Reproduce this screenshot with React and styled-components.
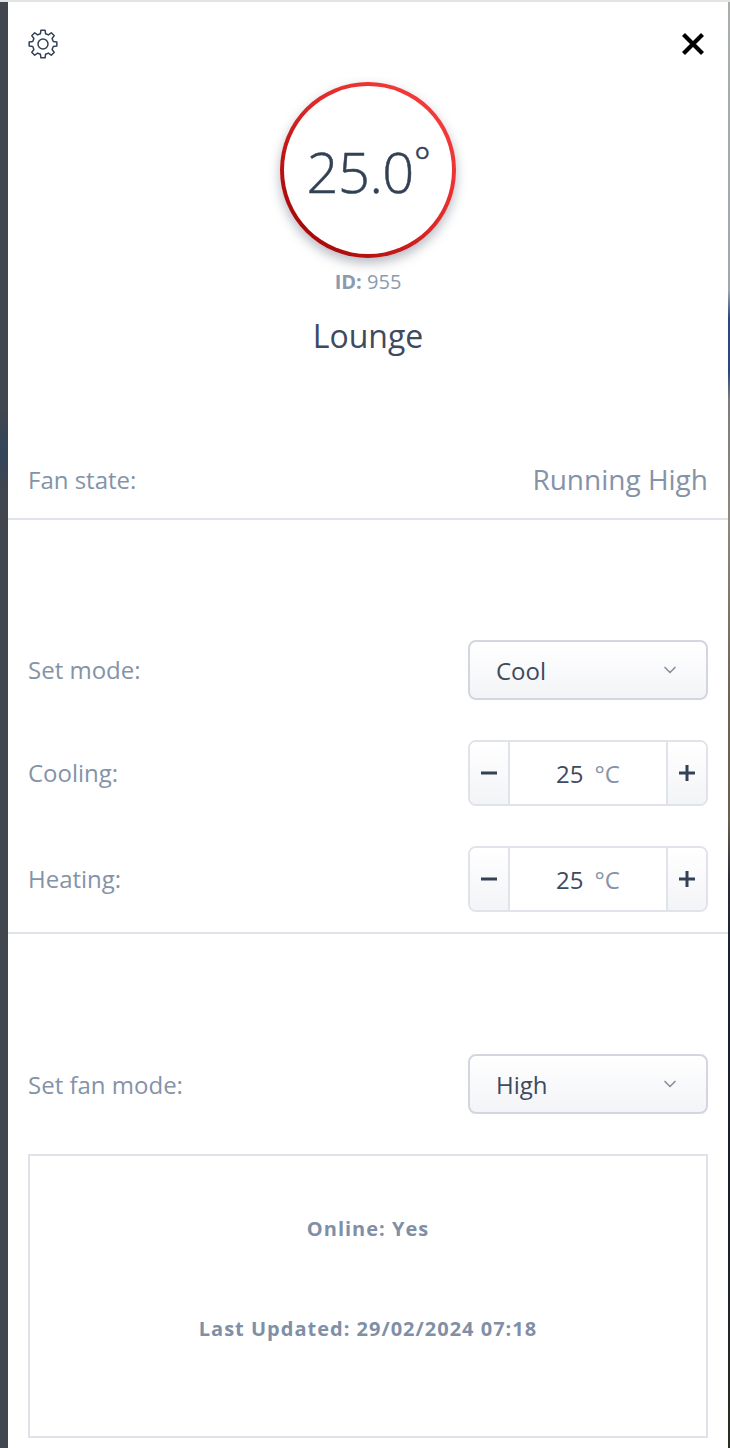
import React from 'react';
import styled, { createGlobalStyle } from 'styled-components';
import { ChevronDown } from 'lucide-react';

const GlobalStyle = createGlobalStyle`
  html, body {
    margin: 0;
    padding: 0;
    height: 1448px;
    overflow: hidden;
    font-family: "Open Sans", "Liberation Sans", sans-serif;
    background: #fff;
  }
`

const Page = styled.div`
  height: 1448px;
  padding: 2px 2px 0 8px;
  box-sizing: border-box;
  background:
    linear-gradient(#e3e3e3, #e3e3e3) top / 100% 2px no-repeat,
    linear-gradient(180deg, #41464f 0, #41464f 410px, #32455b 450px, #41464f 490px, #41464f 100%) left / 8px 100% no-repeat,
    linear-gradient(180deg, #a9aeaa 0, #a0a8ae 290px, #2a4a7c 318px, #2a4a7c 372px, #7e7c7c 400px, #8e887e 520px, #6e6252 700px, #6a6050 820px, #2c2c38 880px, #1a2230 950px, #1a1f2a 1200px, #20242a 1300px, #2a3020 100%) right / 2px 100% no-repeat;
`
const Panel = styled.div`
  height: 100%;
  background: #fff;
  box-sizing: border-box;
  padding: 27px 20px 0;
  overflow: hidden;
`
const TopBar = styled.div`
  display: flex;
  justify-content: space-between;
  align-items: flex-start;
  height: 30px;
`
const IconButton = styled.button`
  border: 0;
  padding: 0;
  margin: 0;
  background: none;
  display: flex;
  color: #334155;
`
const CloseButton = styled(IconButton)`
  margin: 4px 4px 0 0;
`
const Hero = styled.div`
  display: flex;
  flex-direction: column;
  align-items: center;
  margin-top: 23px;
  color: #334155;
`
const Dial = styled.div`
  width: 176px;
  height: 176px;
  box-sizing: border-box;
  border: 4px solid transparent;
  border-radius: 50%;
  background:
    linear-gradient(#fff, #fff) padding-box,
    linear-gradient(45deg, #a80a0a 15%, #e02a2a 55%, #f23a3a 85%) border-box;
  box-shadow: 0 5px 12px rgba(70, 80, 100, 0.4);
  display: flex;
  align-items: center;
  justify-content: center;
`
const DialValue = styled.span`
  font-size: 56px;
  font-weight: 300;
  line-height: 1;
  letter-spacing: -0.5px;
  margin-left: 1px;
  position: relative;
  top: 1px;
  -webkit-text-stroke: 0.5px #334155;
`
const Degree = styled.sup`
  font-size: 40px;
  line-height: 0;
  vertical-align: 16px;
`
const DeviceId = styled.div`
  margin-top: 12px;
  font-size: 20px;
  line-height: 24px;
  color: #8a9bb0;
`
const Strong = styled.b`
  font-weight: 700;
`
const Room = styled.div`
  margin-top: 22px;
  font-size: 32px;
  line-height: 40px;
  color: #3e4a60;
`
const Row = styled.div`
  display: flex;
  justify-content: space-between;
  align-items: center;
  height: ${(p) => p.$height}px;
  margin-top: ${(p) => p.$top}px;
`
const Label = styled.span`
  font-size: 24px;
  color: #8493a8;
`
const ControlLabel = styled(Label)`
  margin-bottom: 2px;
`
const StateValue = styled.span`
  font-size: 28px;
  color: #8493a8;
`
const Divider = styled.div`
  height: 2px;
  background: #e0e3e9;
  margin: ${(p) => p.$top}px -20px 0;
`
const Select = styled.div`
  width: 240px;
  height: 60px;
  box-sizing: border-box;
  border: 2px solid #d3d6e0;
  border-radius: 8px;
  background: linear-gradient(180deg, #fff, #f3f4f7);
  padding: 0 26px;
  display: flex;
  align-items: center;
  justify-content: space-between;
  font-size: 24px;
  color: #3e4a60;
`
const Stepper = styled.div`
  width: 240px;
  height: 66px;
  box-sizing: border-box;
  border: 2px solid #e0e3e9;
  border-radius: 8px;
  display: flex;
  overflow: hidden;
`
const StepButton = styled.div`
  width: 38px;
  background: linear-gradient(180deg, #fff, #f3f4f7);
  display: flex;
  align-items: center;
  justify-content: center;
  color: #334155;
  border-${(p) => p.$side}: 2px solid #e0e3e9;
`
const StepValue = styled.div`
  flex: 1;
  display: flex;
  align-items: center;
  justify-content: center;
  gap: 11px;
  font-size: 24px;
  color: #3e4a60;
`
const Unit = styled.span`
  color: #8493a8;
`
const StatusBox = styled.div`
  height: 284px;
  box-sizing: border-box;
  margin-top: 40px;
  border: 2px solid #dfe3e8;
  padding-top: 59px;
  display: flex;
  flex-direction: column;
  align-items: center;
  gap: 72px;
  font-size: 20px;
  line-height: 28px;
  font-weight: 700;
  letter-spacing: 1px;
  color: #7f8fa6;
`

// eight flat teeth round the centre
const gearPath = () => {
  const point = (radius, deg) => {
    const rad = (deg * Math.PI) / 180;
    return `${(15 + radius * Math.sin(rad)).toFixed(2)} ${(15 - radius * Math.cos(rad)).toFixed(2)}`;
  };
  const parts = [];
  for (let i = 0; i < 8; i++) {
    const a = i * 45;
    parts.push(point(10.6, a - 14), point(14, a - 8.5), point(14, a + 8.5), point(10.6, a + 14));
  }
  return `M${parts.join('L')}Z`;
};

const GearIcon = () => (
  <svg width="30" height="30" viewBox="0 0 30 30" fill="none" stroke="currentColor" strokeWidth="1.5" strokeLinejoin="round">
    <path d={gearPath()} />
    <circle cx="15" cy="15" r="5" />
  </svg>
);

const Minus = () => (
  <svg width="16" height="16" viewBox="0 0 16 16">
    <path d="M0 8h16" stroke="currentColor" strokeWidth="3" />
  </svg>
);

const Plus = () => (
  <svg width="16" height="16" viewBox="0 0 16 16">
    <path d="M0 8h16M8 0v16" stroke="currentColor" strokeWidth="3" />
  </svg>
);

const CloseIcon = () => (
  <svg width="22" height="22" viewBox="0 0 22 22">
    <path d="M1.5 1.5l19 19M20.5 1.5l-19 19" stroke="#000" strokeWidth="4.2" />
  </svg>
);

const TempStepper = ({ value }) => (
  <Stepper>
    <StepButton $side="right"><Minus /></StepButton>
    <StepValue>{value} <Unit>°C</Unit></StepValue>
    <StepButton $side="left"><Plus /></StepButton>
  </Stepper>
);

const ModeSelect = ({ value }) => (
  <Select>
    {value}
    <ChevronDown size={20} color="#8a909c" strokeWidth={2} />
  </Select>
);

export default function App() {
  return (
    <Page>
      <GlobalStyle />
      <Panel>
        <TopBar>
          <IconButton><GearIcon /></IconButton>
          <CloseButton><CloseIcon /></CloseButton>
        </TopBar>
        <Hero>
          <Dial>
            <DialValue>25.0<Degree>°</Degree></DialValue>
          </Dial>
          <DeviceId><Strong>ID:</Strong> 955</DeviceId>
          <Room>Lounge</Room>
        </Hero>
        <Row $height={40} $top={103}>
          <Label>Fan state:</Label>
          <StateValue>Running High</StateValue>
        </Row>
        <Divider $top={19} />
        <Row $height={60} $top={120}>
          <ControlLabel>Set mode:</ControlLabel>
          <ModeSelect value="Cool" />
        </Row>
        <Row $height={66} $top={40}>
          <ControlLabel>Cooling:</ControlLabel>
          <TempStepper value="25" />
        </Row>
        <Row $height={66} $top={40}>
          <ControlLabel>Heating:</ControlLabel>
          <TempStepper value="25" />
        </Row>
        <Divider $top={20} />
        <Row $height={60} $top={120}>
          <Label>Set fan mode:</Label>
          <ModeSelect value="High" />
        </Row>
        <StatusBox>
          <span>Online: Yes</span>
          <span>Last Updated: 29/02/2024 07:18</span>
        </StatusBox>
      </Panel>
    </Page>
  );
}
